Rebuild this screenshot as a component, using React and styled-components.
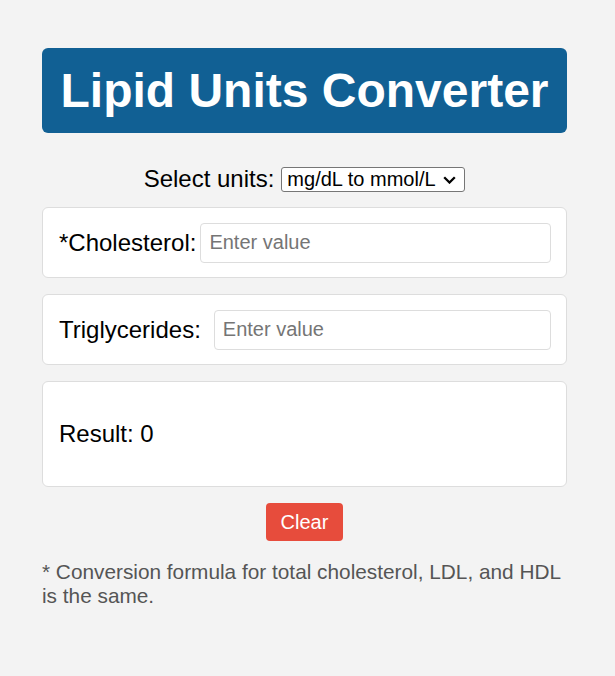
import React, { useState } from "react";
import styled, { createGlobalStyle } from "styled-components";

const Global = createGlobalStyle`
  html, body { margin: 0; padding: 0; background: #f3f3f3; }
  body { font-family: "Liberation Sans", Arial, sans-serif; }
`;

const Page = styled.div`
  padding: 48px 48px 40px 42px;
  width: 525px;
`;

const Header = styled.h1`
  margin: 0;
  height: 85px;
  background: #116094;
  border-radius: 6px;
  color: #fff;
  font-size: 48px;
  font-weight: bold;
  display: flex;
  align-items: center;
  justify-content: center;
`;

const SelectRow = styled.div`
  margin-top: 33px;
  height: 26px;
  display: flex;
  justify-content: center;
  align-items: center;
  gap: 7px;
  font-size: 24px;
  color: #000;
`;

const SelectWrap = styled.div`
  position: relative;
  display: flex;
`;

const Select = styled.select`
  appearance: none;
  -webkit-appearance: none;
  width: 184px;
  height: 25px;
  box-sizing: border-box;
  font-family: "Liberation Sans", Arial, sans-serif;
  font-size: 20px;
  line-height: 23px;
  padding: 0 0 0 5px;
  border: 1px solid #767676;
  border-radius: 3px;
  background: #fff;
  color: #000;
`;

const Chevron = styled.svg`
  position: absolute;
  right: 9px;
  top: 9px;
  pointer-events: none;
`;

const Card = styled.div`
  margin-top: ${(p) => p.$mt || 16}px;
  height: ${(p) => p.$h || 71}px;
  box-sizing: border-box;
  background: #fff;
  border: 1px solid #ddd;
  border-radius: 6px;
  padding: 0 15px 0 16px;
  display: flex;
  align-items: center;
  font-size: 24px;
  color: #000;
`;

const Label = styled.label`
  margin-right: ${(p) => p.$gap}px;
  white-space: nowrap;
`;

const Input = styled.input`
  flex: 1;
  min-width: 0;
  height: 40px;
  box-sizing: border-box;
  border: 1px solid #ddd;
  border-radius: 4px;
  padding: 0 8px;
  font-family: "Liberation Sans", Arial, sans-serif;
  font-size: 20px;
  &::placeholder { color: #757575; }
`;

const ButtonRow = styled.div`
  margin-top: 16px;
  display: flex;
  justify-content: center;
`;

const ClearButton = styled.button`
  width: 77px;
  height: 38px;
  border: none;
  border-radius: 4px;
  background: #e74c3c;
  color: #fff;
  font-family: "Liberation Sans", Arial, sans-serif;
  font-size: 20px;
  cursor: pointer;
`;

const Note = styled.p`
  margin: 19px 0 0;
  font-size: 20.8px;
  line-height: 24px;
  color: #555;
`;

export default function App() {
  const [chol, setChol] = useState("");
  const [tri, setTri] = useState("");
  return (
    <Page>
      <Global />
      <Header>Lipid Units Converter</Header>
      <SelectRow>
        <span>Select units:</span>
        <SelectWrap>
          <Select defaultValue="a">
            <option value="a">mg/dL to mmol/L</option>
            <option value="b">mmol/L to mg/dL</option>
          </Select>
          <Chevron width="13" height="8" viewBox="0 0 13 8" aria-hidden="true">
            <path d="M1.2 1.2l5.3 5.3 5.3-5.3" fill="none" stroke="#000" strokeWidth="2.3" />
          </Chevron>
        </SelectWrap>
      </SelectRow>
      <Card $mt={15}>
        <Label $gap={4}>*Cholesterol:</Label>
        <Input placeholder="Enter value" value={chol} onChange={(e) => setChol(e.target.value)} />
      </Card>
      <Card>
        <Label $gap={13}>Triglycerides:</Label>
        <Input placeholder="Enter value" value={tri} onChange={(e) => setTri(e.target.value)} />
      </Card>
      <Card $h={106}>Result: 0</Card>
      <ButtonRow>
        <ClearButton onClick={() => { setChol(""); setTri(""); }}>Clear</ClearButton>
      </ButtonRow>
      <Note>* Conversion formula for total cholesterol, LDL, and HDL is the same.</Note>
    </Page>
  );
}
